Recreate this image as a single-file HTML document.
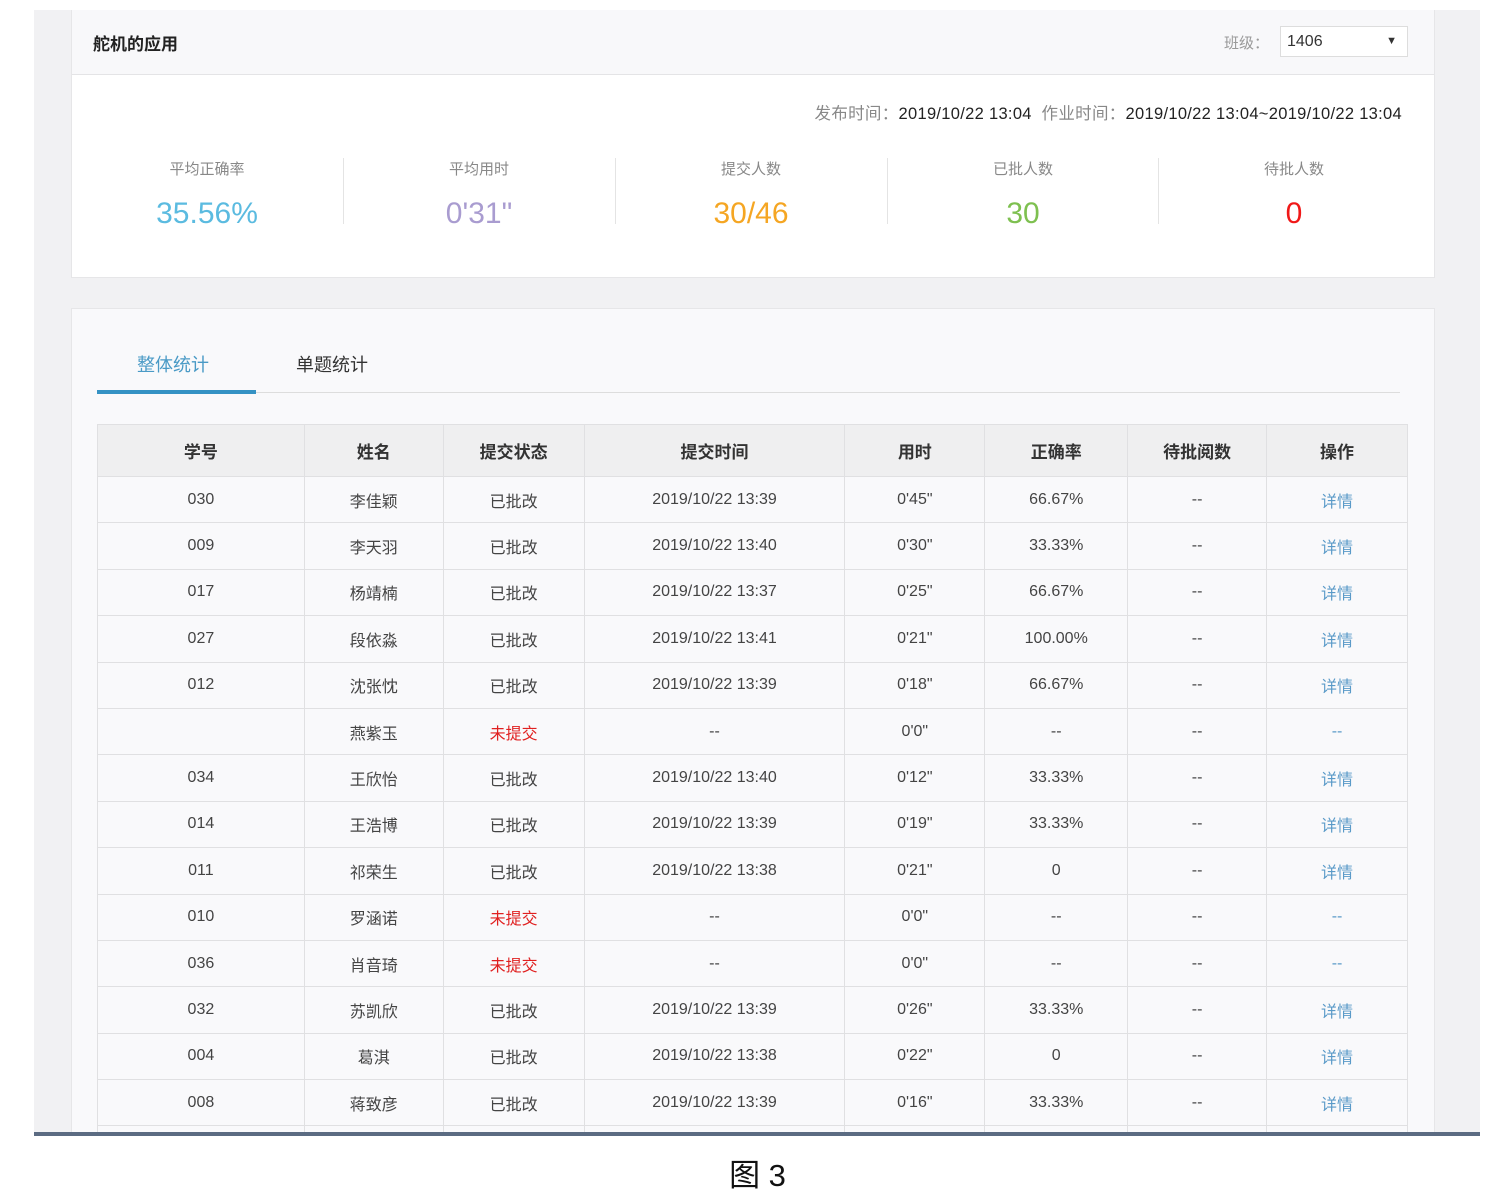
<!DOCTYPE html>
<html><head><meta charset="utf-8"><style>
*{margin:0;padding:0;box-sizing:border-box}
body{width:1493px;height:1203px;background:#fff;position:relative;overflow:hidden;font-family:"Liberation Sans","Noto Sans CJK SC",sans-serif;color:#333}
.abs{position:absolute}
.outer{left:34px;top:10px;width:1446px;height:1124px;background:#f1f1f3}
.card1{left:71px;top:10px;width:1364px;height:268px;background:#fff;border:1px solid #e6e6e8;border-top:none}
.hd{left:0;top:0;width:100%;height:65px;background:#f8f8fa;border-bottom:1px solid #e4e4e6}
.stat{top:158px;width:272px;text-align:center}
.stat .l{font-size:15px;color:#888;height:24px;line-height:24px}
.stat .v{font-size:30px;margin-top:14px;line-height:36px}
.sep{top:158px;width:1px;height:66px;background:#e4e4e4}
.card2{left:71px;top:308px;width:1364px;height:826px;background:#f9f9fb;border:1px solid #e6e6e8;border-bottom:none}
table{position:absolute;left:97px;top:424px;border-collapse:collapse;width:1311px;font-size:16px;color:#444}
td,th{border:1px solid #e0e0e2;text-align:center;height:46.4px;padding:0}
th{background:#efeff0;font-weight:bold;font-size:17px;color:#333;height:52px}
td{background:#f9f9fb}
.r{color:#e02020}.b{color:#5a9ac8}
</style></head><body>
<div class="abs outer"></div>
<div class="abs card1">
 <div class="abs hd"></div>
 <div class="abs" style="left:21px;top:20px;font-size:17px;font-weight:bold;color:#222">舵机的应用</div>
 <div class="abs" style="left:1152px;top:22px;font-size:15px;color:#999">班级：</div>
 <div class="abs" style="left:1208px;top:16px;width:128px;height:31px;background:#fff;border:1px solid #ddd;font-size:16px;line-height:29px;padding-left:6px;color:#333">1406<span style="position:absolute;right:10px;font-size:11px">▼</span></div>
 <div class="abs" style="right:32px;top:90px;font-size:16.5px;letter-spacing:0.3px;color:#222"><span style="color:#888">发布时间：</span>2019/10/22 13:04&nbsp; <span style="color:#888">作业时间：</span>2019/10/22 13:04~2019/10/22 13:04</div>
</div>
<div class="abs stat" style="left:71px"><div class="l">平均正确率</div><div class="v" style="color:#5bbbe0">35.56%</div></div>
<div class="abs sep" style="left:343px"></div>
<div class="abs stat" style="left:343px"><div class="l">平均用时</div><div class="v" style="color:#a99cd0">0'31"</div></div>
<div class="abs sep" style="left:615px"></div>
<div class="abs stat" style="left:615px"><div class="l">提交人数</div><div class="v" style="color:#f5a623">30/46</div></div>
<div class="abs sep" style="left:887px"></div>
<div class="abs stat" style="left:887px"><div class="l">已批人数</div><div class="v" style="color:#7ec050">30</div></div>
<div class="abs sep" style="left:1158px"></div>
<div class="abs stat" style="left:1158px"><div class="l">待批人数</div><div class="v" style="color:#f01818">0</div></div>
<div class="abs card2"></div>
<div class="abs" style="left:97px;top:392px;width:1303px;height:1px;background:#ddd"></div>
<div class="abs" style="left:97px;top:390px;width:159px;height:4px;background:#3592c4"></div>
<div class="abs" style="left:137px;top:351px;font-size:18px;color:#4a9ac6">整体统计</div>
<div class="abs" style="left:296px;top:351px;font-size:18px;color:#333">单题统计</div>
<table>
<colgroup><col style="width:207px"><col style="width:139px"><col style="width:141px"><col style="width:261px"><col style="width:140px"><col style="width:143px"><col style="width:139px"><col style="width:141px"></colgroup>
<tr><th>学号</th><th>姓名</th><th>提交状态</th><th>提交时间</th><th>用时</th><th>正确率</th><th>待批阅数</th><th>操作</th></tr>
<tr><td>030</td><td>李佳颖</td><td>已批改</td><td>2019/10/22 13:39</td><td>0'45"</td><td>66.67%</td><td>--</td><td class="b">详情</td></tr>
<tr><td>009</td><td>李天羽</td><td>已批改</td><td>2019/10/22 13:40</td><td>0'30"</td><td>33.33%</td><td>--</td><td class="b">详情</td></tr>
<tr><td>017</td><td>杨靖楠</td><td>已批改</td><td>2019/10/22 13:37</td><td>0'25"</td><td>66.67%</td><td>--</td><td class="b">详情</td></tr>
<tr><td>027</td><td>段依淼</td><td>已批改</td><td>2019/10/22 13:41</td><td>0'21"</td><td>100.00%</td><td>--</td><td class="b">详情</td></tr>
<tr><td>012</td><td>沈张忱</td><td>已批改</td><td>2019/10/22 13:39</td><td>0'18"</td><td>66.67%</td><td>--</td><td class="b">详情</td></tr>
<tr><td></td><td>燕紫玉</td><td class="r">未提交</td><td>--</td><td>0'0"</td><td>--</td><td>--</td><td class="b">--</td></tr>
<tr><td>034</td><td>王欣怡</td><td>已批改</td><td>2019/10/22 13:40</td><td>0'12"</td><td>33.33%</td><td>--</td><td class="b">详情</td></tr>
<tr><td>014</td><td>王浩博</td><td>已批改</td><td>2019/10/22 13:39</td><td>0'19"</td><td>33.33%</td><td>--</td><td class="b">详情</td></tr>
<tr><td>011</td><td>祁荣生</td><td>已批改</td><td>2019/10/22 13:38</td><td>0'21"</td><td>0</td><td>--</td><td class="b">详情</td></tr>
<tr><td>010</td><td>罗涵诺</td><td class="r">未提交</td><td>--</td><td>0'0"</td><td>--</td><td>--</td><td class="b">--</td></tr>
<tr><td>036</td><td>肖音琦</td><td class="r">未提交</td><td>--</td><td>0'0"</td><td>--</td><td>--</td><td class="b">--</td></tr>
<tr><td>032</td><td>苏凯欣</td><td>已批改</td><td>2019/10/22 13:39</td><td>0'26"</td><td>33.33%</td><td>--</td><td class="b">详情</td></tr>
<tr><td>004</td><td>葛淇</td><td>已批改</td><td>2019/10/22 13:38</td><td>0'22"</td><td>0</td><td>--</td><td class="b">详情</td></tr>
<tr><td>008</td><td>蒋致彦</td><td>已批改</td><td>2019/10/22 13:39</td><td>0'16"</td><td>33.33%</td><td>--</td><td class="b">详情</td></tr>
<tr><td></td><td></td><td></td><td></td><td></td><td></td><td></td><td></td></tr>
</table>
<div class="abs" style="left:0;top:1136px;width:1493px;height:67px;background:#fff"></div>
<div class="abs" style="left:34px;top:1132px;width:1446px;height:4px;background:#5b6b82"></div>
<div class="abs" style="left:0;top:1150px;width:1515px;text-align:center;font-size:31px;color:#111">图 3</div>
</body></html>
